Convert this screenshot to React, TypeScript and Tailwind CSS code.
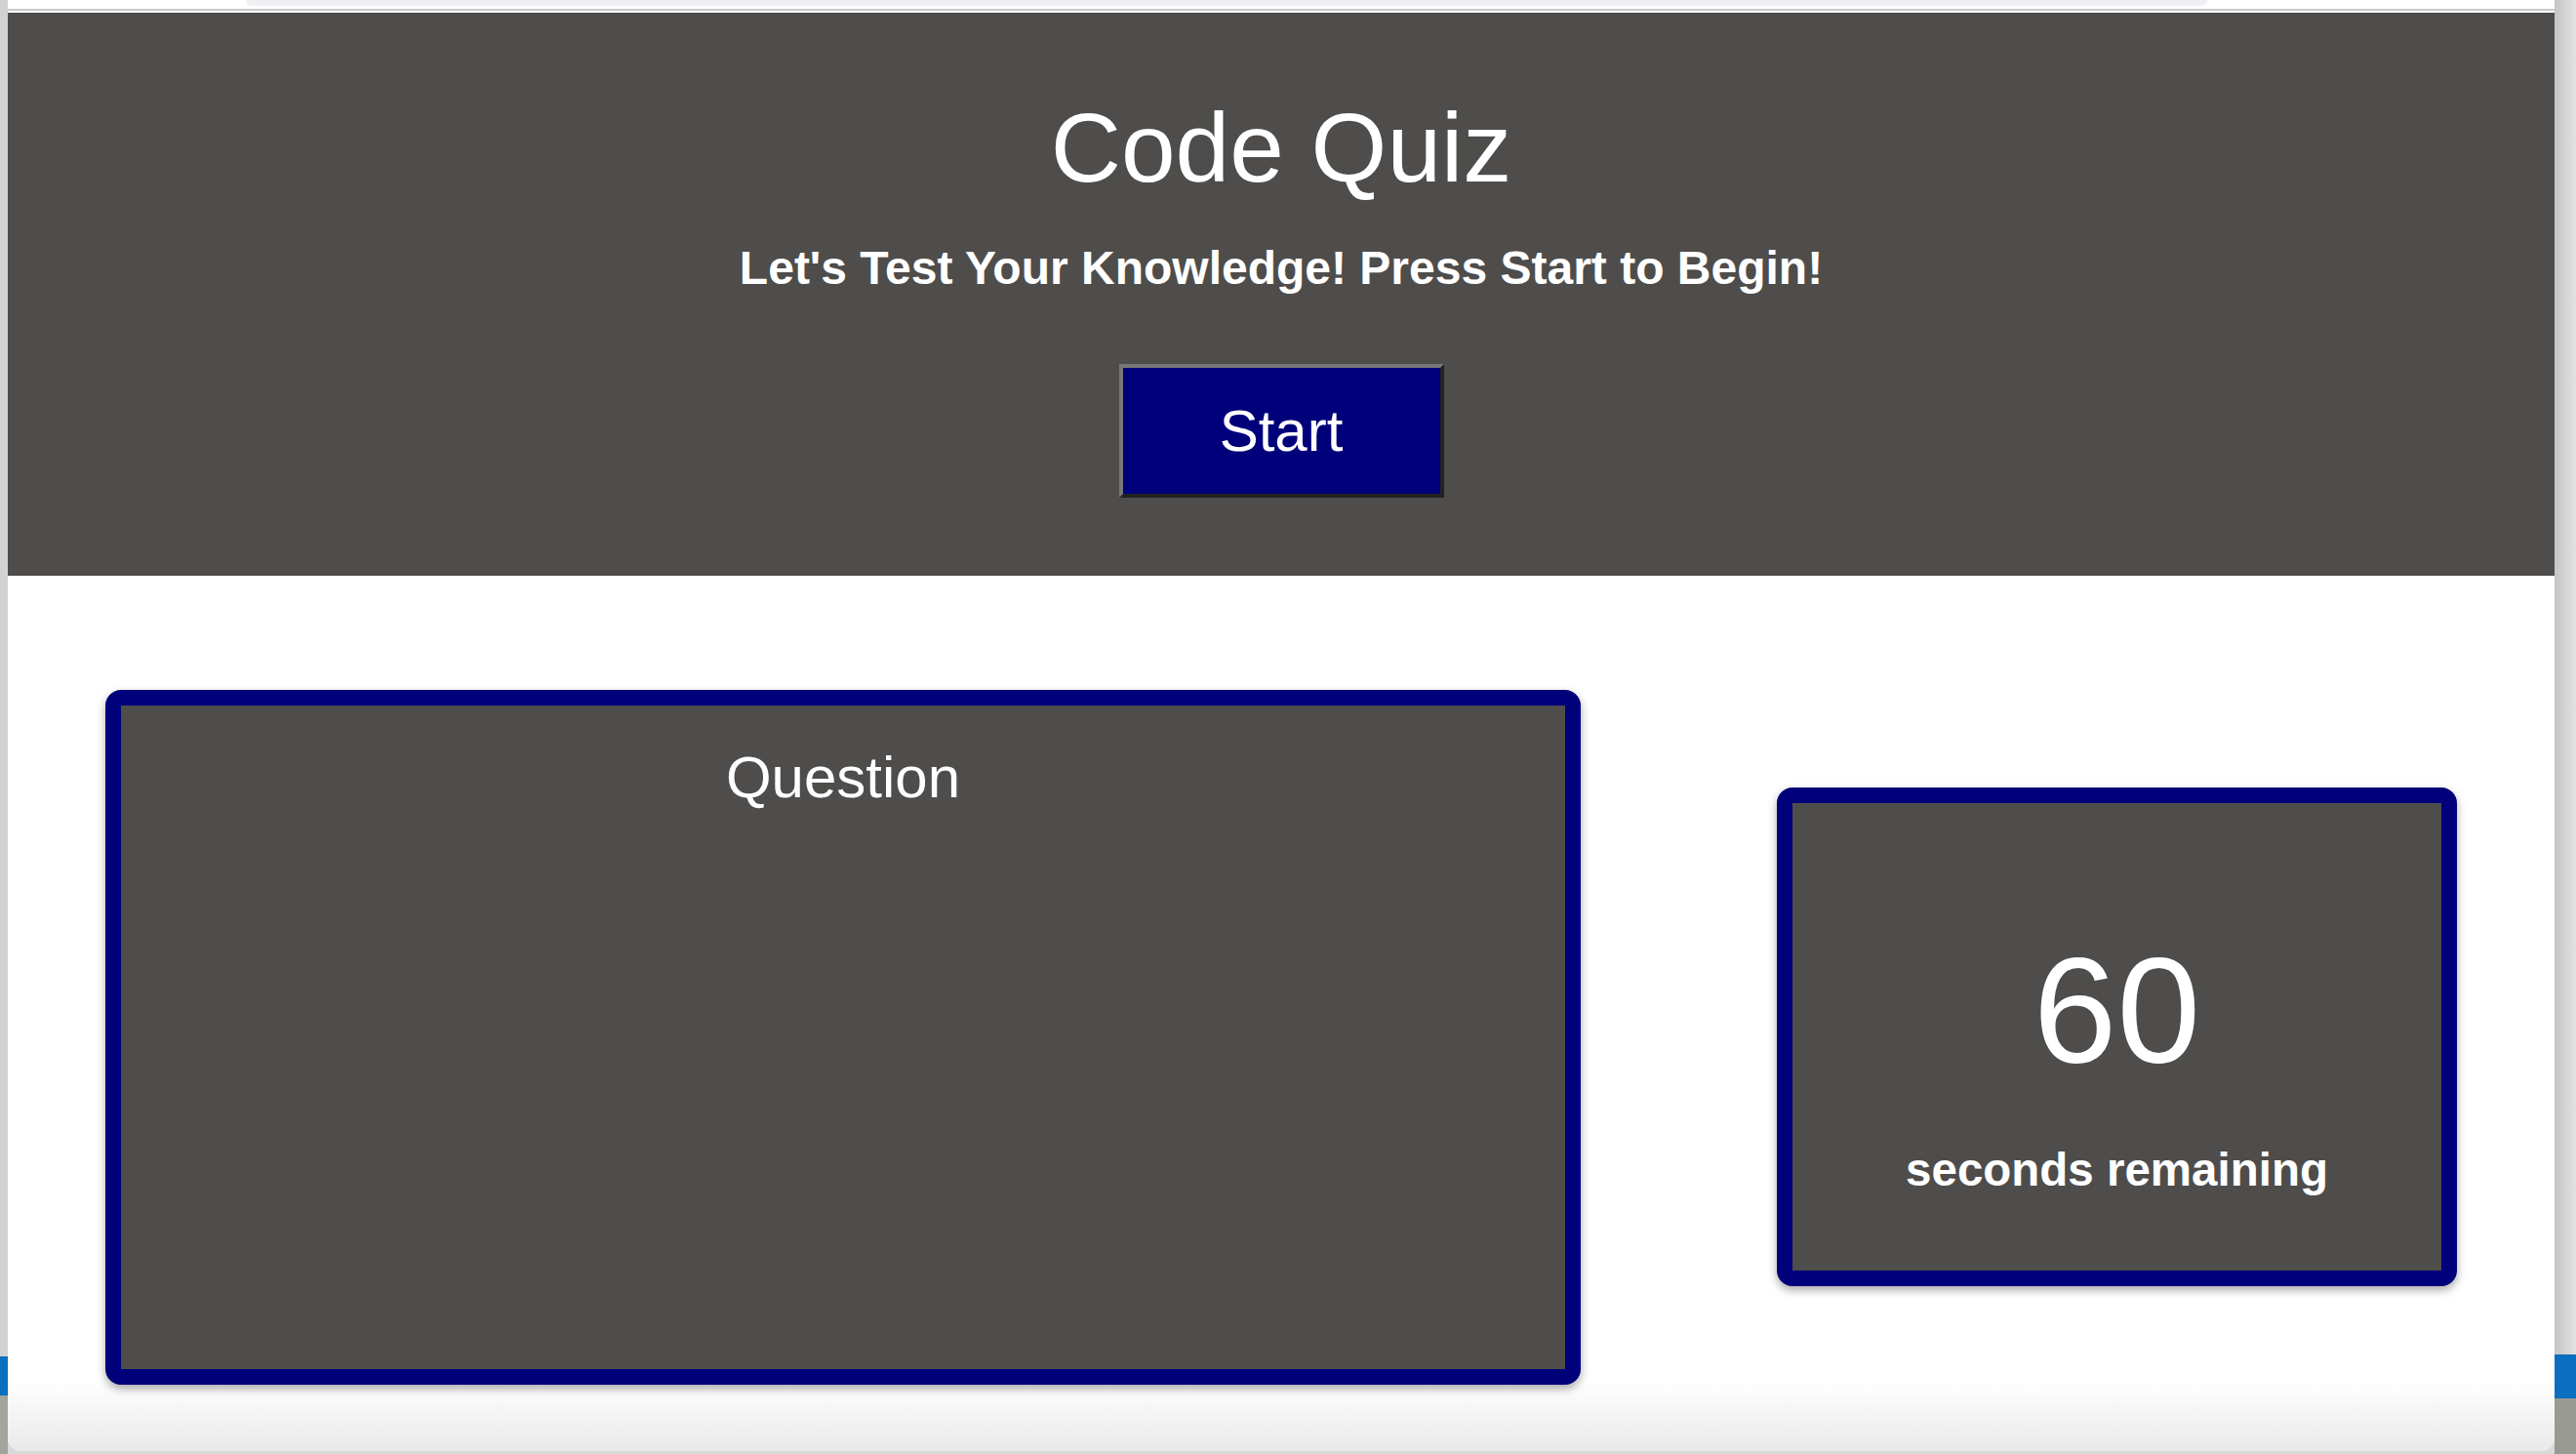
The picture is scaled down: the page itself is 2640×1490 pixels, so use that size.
import React from 'react';

const navy = 'border-[#00007a]';

function Header() {
  return (
    <header className="flex flex-col items-center bg-[#4e4d4b] pt-[88px] pb-[80px] text-white">
      <h1 className="text-[100px] leading-none font-normal">Code Quiz</h1>
      <p className="mt-[50px] text-[48px] leading-none font-bold">
        Let's Test Your Knowledge! Press Start to Begin!
      </p>
      <button
        type="button"
        className="mt-[74px] flex h-[137px] w-[333px] items-center justify-center border-4 border-t-[#777777] border-l-[#777777] border-r-[#222222] border-b-[#222222] bg-[#00007a] text-[60px] leading-none text-white"
      >
        Start
      </button>
    </header>
  );
}

function QuestionCard() {
  return (
    <section
      className={`flex h-[712px] w-[1512px] flex-col items-center rounded-[16px] border-[16px] ${navy} bg-[#4e4d4b] pt-[44px] text-white shadow-[0_4px_10px_rgba(0,0,0,0.35)]`}
    >
      <h2 className="text-[60px] leading-none font-normal">Question</h2>
    </section>
  );
}

function TimerCard({ seconds }: { seconds: number }) {
  return (
    <section
      className={`flex h-[511px] w-[697px] flex-col items-center rounded-[16px] border-[16px] ${navy} bg-[#4e4d4b] pt-[136px] text-white shadow-[0_4px_10px_rgba(0,0,0,0.35)]`}
    >
      <span className="text-[154px] leading-none">{seconds}</span>
      <span className="mt-[62px] text-[47.5px] leading-none font-bold">seconds remaining</span>
    </section>
  );
}

export default function App() {
  return (
    <div
      className="flex h-[1490px] w-[2640px] overflow-hidden bg-[#d9d9d9]"
      style={{ fontFamily: '"Liberation Sans", Arial, sans-serif' }}
    >
      {/* desktop strip on the left */}
      <div className="flex w-[8px] flex-col bg-[#d2d2d2]">
        <div className="h-[1390px]" />
        <div className="h-[40px] bg-[#0a6fc0]" />
        <div className="flex-1 bg-[#a4a49e]" />
      </div>

      {/* browser window */}
      <div className="flex h-[1487px] w-[2610px] flex-col overflow-hidden rounded-b-[14px] bg-white">
        <div className="h-[11px] border-b-2 border-[#c9cacd] bg-white">
          <div className="ml-[244px] h-[6px] w-[2010px] rounded-b-[8px] bg-[#eff0f3]" />
        </div>
        <div className="h-[2px]" />
        <Header />
        <main className="flex flex-1 items-center justify-between bg-linear-to-b from-white from-[92%] to-[#e9e9e9] px-[100px] pb-[68px] pt-[116px]">
          <QuestionCard />
          <TimerCard seconds={60} />
        </main>
      </div>

      {/* desktop strip on the right */}
      <div className="flex flex-1 flex-col bg-linear-to-r from-[#c4c4c4] to-[#e2e2e2]">
        <div className="h-[1388px]" />
        <div className="h-[45px] bg-[#0a6fc0]" />
        <div className="flex-1 bg-[#9a9a94]" />
      </div>
    </div>
  );
}
